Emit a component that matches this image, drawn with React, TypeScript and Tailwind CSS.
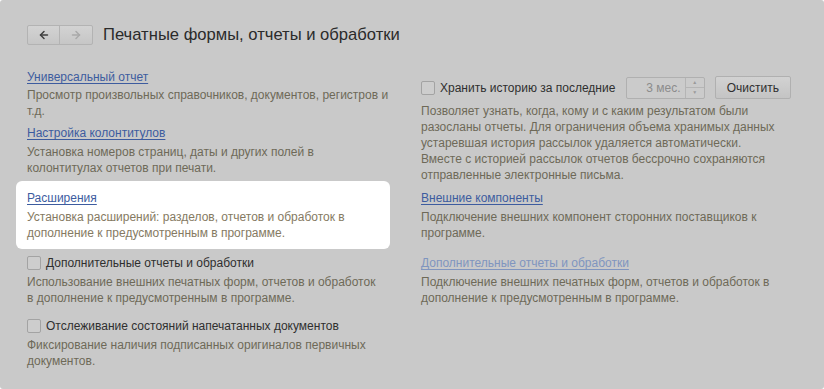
import { ArrowLeft, ArrowRight } from "lucide-react";

const FONT = { fontFamily: '"Liberation Sans", Arial, sans-serif' };

function Link({ children, muted }: { children: React.ReactNode; muted?: boolean }) {
  return (
    <a
      className={`block h-4 whitespace-nowrap leading-4 underline underline-offset-2 decoration-1 ${
        muted ? "text-[#8095bf] decoration-[#8095bf]" : "text-[#3d5c9f] decoration-[#3d5c9f]"
      }`}
    >
      {children}
    </a>
  );
}

function Desc({ children, light }: { children: React.ReactNode; light?: boolean }) {
  return (
    <p className={`whitespace-nowrap leading-4 ${light ? "text-[#857a62]" : "text-[#6e6958]"}`}>
      {children}
    </p>
  );
}

function Check({ label }: { label: string }) {
  return (
    <label className="flex h-4 items-center gap-[5px] whitespace-nowrap text-[#2f2f2f]">
      <span className="h-[14px] w-[14px] shrink-0 rounded-[2px] border border-[#a3a3a3] bg-[#cdcdcd]" />
      <span className="leading-4">{label}</span>
    </label>
  );
}

export default function App() {
  return (
    <div className="bg-white" style={FONT}>
      <div className="h-[389px] w-[824px] overflow-hidden rounded-[3px] bg-[#c9c9c9] text-[12px]">
        {/* шапка */}
        <div className="flex items-center pl-[27px] pt-[25px]">
          <div className="flex h-5 overflow-hidden rounded-[2px] border border-[#b3b3b3] bg-gradient-to-b from-[#d3d3d3] to-[#c6c6c6]">
            <button className="flex w-8 items-center justify-center border-r border-[#b3b3b3] text-[#3f3f3f]">
              <ArrowLeft size={12} strokeWidth={3} />
            </button>
            <button className="flex w-8 items-center justify-center text-[#a9a9a9]">
              <ArrowRight size={12} strokeWidth={3} />
            </button>
          </div>
          <h1 className="ml-[10px] text-[16.6px] leading-5 text-[#2b2b2b]">
            Печатные формы, отчеты и обработки
          </h1>
        </div>

        <div className="mt-[24px] flex pl-[27px]">
          {/* левая колонка */}
          <div className="w-[363px]">
            <Link>Универсальный отчет</Link>
            <div className="mt-[2px]">
              <Desc>
                Просмотр произвольных справочников, документов, регистров и
                <br />
                т.д.
              </Desc>
            </div>
            <div className="mt-[6px]">
              <Link>Настройка колонтитулов</Link>
            </div>
            <div className="mt-[3px]">
              <Desc>
                Установка номеров страниц, даты и других полей в
                <br />
                колонтитулах отчетов при печати.
              </Desc>
            </div>

            <div className="-ml-[11px] mt-[5px] w-[374px] rounded-[6px] bg-white pb-2 pl-[11px] pt-[9px]">
              <Link>Расширения</Link>
              <div className="mt-[3px]">
                <Desc light>
                  Установка расширений: разделов, отчетов и обработок в
                  <br />
                  дополнение к предусмотренным в программе.
                </Desc>
              </div>
            </div>

            <div className="mt-[6px]">
              <Check label="Дополнительные отчеты и обработки" />
            </div>
            <div className="mt-[3px]">
              <Desc>
                Использование внешних печатных форм, отчетов и обработок
                <br />в дополнение к предусмотренным в программе.
              </Desc>
            </div>
            <div className="mt-[12px]">
              <Check label="Отслеживание состояний напечатанных документов" />
            </div>
            <div className="mt-[3px]">
              <Desc>
                Фиксирование наличия подписанных оригиналов первичных
                <br />
                документов.
              </Desc>
            </div>
          </div>

          {/* правая колонка */}
          <div className="ml-[31px] w-[370px]">
            <div className="mt-[7px] flex h-[23px] items-center">
              <Check label="Хранить историю за последние" />
              <div className="ml-[11px] flex h-[22px] w-[81px] rounded-[2px] border border-[#b0b0b0] bg-[#cbcbcb]">
                <span className="flex-1 pr-[4px] text-right leading-5 text-[#8c8c8c]">3 мес.</span>
                <div className="flex w-[19px] flex-col border-l border-[#b5b5b5]">
                  <span className="flex flex-1 items-center justify-center border-b border-[#b5b5b5] text-[5px] leading-none text-[#9a9a9a]">
                    ▲
                  </span>
                  <span className="flex flex-1 items-center justify-center text-[5px] leading-none text-[#9a9a9a]">
                    ▼
                  </span>
                </div>
              </div>
              <button className="ml-[10px] h-[23px] w-[79px] rounded-[2px] border border-[#b0b0b0] bg-gradient-to-b from-[#d2d2d2] to-[#c4c4c4] text-[#2f2f2f]">
                Очистить
              </button>
            </div>
            <div className="mt-[4px]">
              <Desc>
                Позволяет узнать, когда, кому и с каким результатом были
                <br />
                разосланы отчеты. Для ограничения объема хранимых данных
                <br />
                устаревшая история рассылок удаляется автоматически.
                <br />
                Вместе с историей рассылок отчетов бессрочно сохраняются
                <br />
                отправленные электронные письма.
              </Desc>
            </div>
            <div className="mt-[7px]">
              <Link>Внешние компоненты</Link>
            </div>
            <div className="mt-[3px]">
              <Desc>
                Подключение внешних компонент сторонних поставщиков к
                <br />
                программе.
              </Desc>
            </div>
            <div className="mt-[14px]">
              <Link muted>Дополнительные отчеты и обработки</Link>
            </div>
            <div className="mt-[3px]">
              <Desc>
                Подключение внешних печатных форм, отчетов и обработок в
                <br />
                дополнение к предусмотренным в программе.
              </Desc>
            </div>
          </div>
        </div>
      </div>
    </div>
  );
}
